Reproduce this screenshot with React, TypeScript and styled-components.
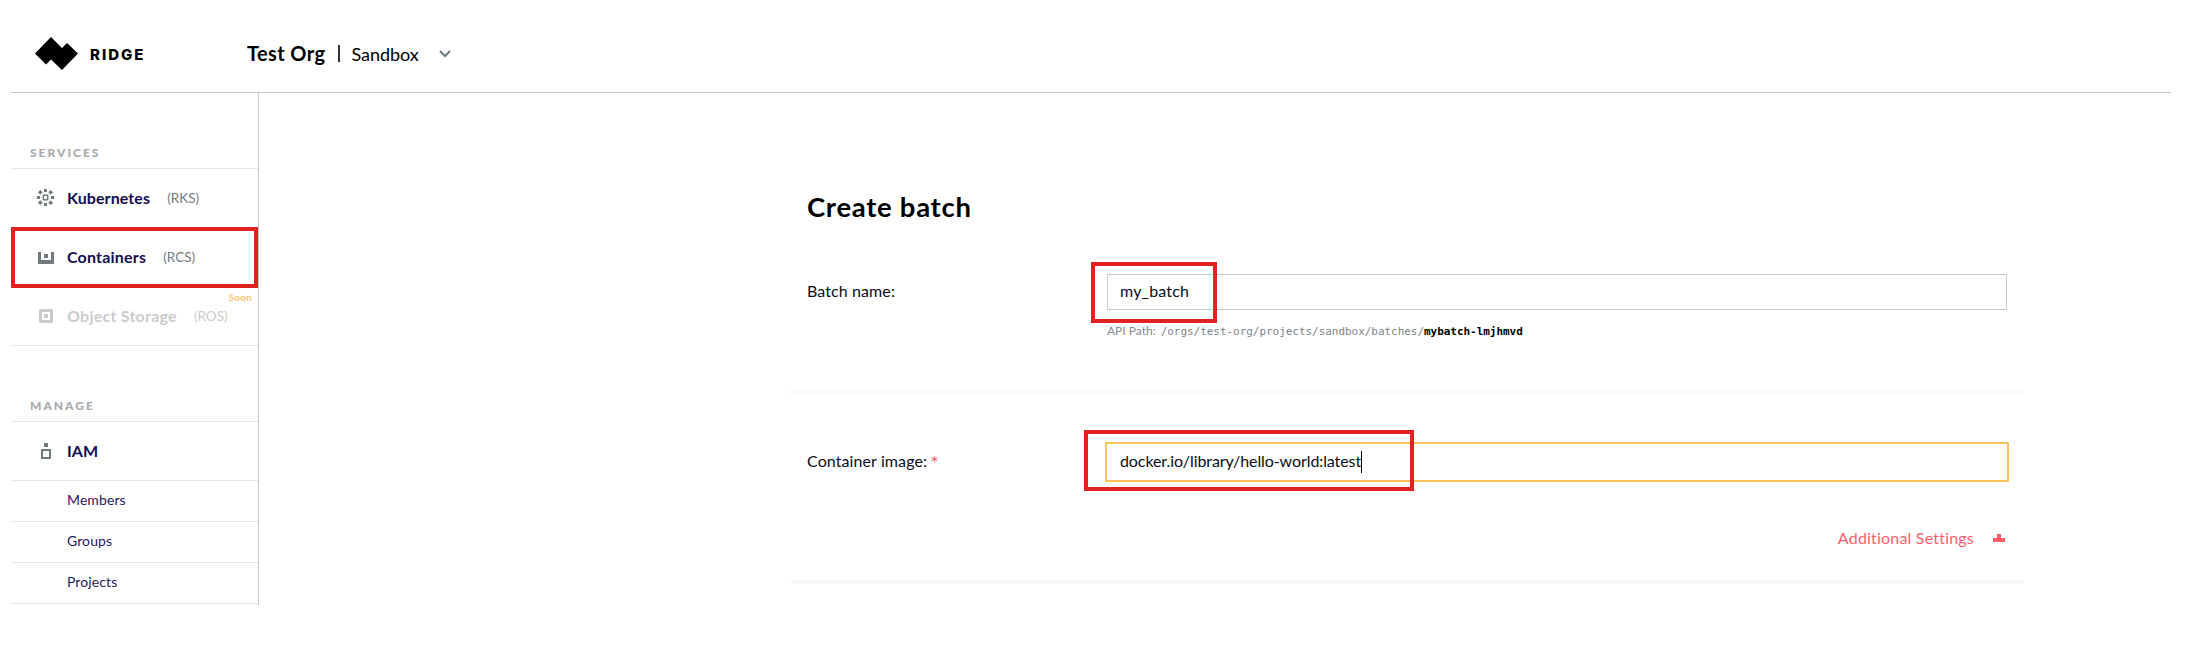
import React from "react";
import styled, { createGlobalStyle } from "styled-components";

const Global = createGlobalStyle`
  *, *::before, *::after { box-sizing: border-box; }
  body { margin: 0; background: #fff; font-family: Lato, "Noto Sans", sans-serif; color: #0c0c14; }
`;

const Page = styled.div`
  width: 2160px;
  margin-left: 11px;
`;

const Header = styled.header`
  display: flex;
  height: 93px;
  border-bottom: 1px solid #c5c9ca;
  padding: 15px 0 0 24px;
  align-items: center;
`;
const Brand = styled.div`
  display: flex;
  align-items: center;
  gap: 12px;
  width: 212px;
  color: #000;
`;
const BrandName = styled.span`
  font: 800 15px/20px Inter, sans-serif;
  letter-spacing: 2px;
  padding-top: 2px;
`;
const Crumb = styled.div`
  display: flex;
  align-items: baseline;
  color: #000;
  line-height: 26px;
  white-space: nowrap;
`;
const OrgName = styled.span`
  font-size: 20px;
  font-weight: 700;
  letter-spacing: 0.4px;
`;
const Separator = styled.i`
  width: 2px;
  height: 17px;
  margin: 0 11px 0 13px;
  background: #333;
  align-self: center;
`;
const ProjectName = styled.span`
  font-size: 18px;
  letter-spacing: -0.05px;
  margin-right: 20px;
`;

const Body = styled.div`
  display: flex;
  align-items: flex-start;
`;
const Sidebar = styled.nav`
  width: 248px;
  height: 512px;
  border-right: 1px solid #c3c7c8;
`;
const SectionLabel = styled.h2`
  margin: 0;
  height: 75px;
  padding: 52px 0 0 19px;
  font-size: 12px;
  line-height: 16px;
  font-weight: 900;
  letter-spacing: 2px;
  color: #a6abac;
`;
const Services = styled.div`
  border: solid #e4e7e7;
  border-width: 1px 0;
`;
const NavRow = styled.a<{ $dim?: boolean; $last?: boolean }>`
  position: relative;
  display: flex;
  align-items: center;
  height: ${(p) => (p.$last ? 58 : 59)}px;
  padding: 0 0 ${(p) => (p.$last ? 2 : 3)}px 26px;
  color: ${(p) => (p.$dim ? "#c9cccd" : "#160b52")};
  white-space: nowrap;
`;
const IconSlot = styled.span<{ $dim?: boolean; $drop: number }>`
  display: flex;
  width: 30px;
  padding-top: ${(p) => p.$drop}px;
  color: ${(p) => (p.$dim ? "#c9cccd" : "#717b7e")};
`;
const NavName = styled.span<{ $track?: number }>`
  font-size: 16px;
  font-weight: 700;
  letter-spacing: ${(p) => p.$track ?? 0.1}px;
`;
const NavCode = styled.span<{ $dim?: boolean }>`
  margin-left: 17px;
  padding-top: 1px;
  font-size: 13.5px;
  color: ${(p) => (p.$dim ? "#c9cccd" : "#747c80")};
`;
const Soon = styled.span`
  position: absolute;
  right: 6px;
  top: 3px;
  font-size: 10px;
  line-height: 14px;
  font-weight: 700;
  letter-spacing: 0.2px;
  color: #fdc56b;
`;
const SubItem = styled.a`
  display: block;
  height: 41px;
  padding: 9px 0 0 56px;
  border-bottom: 1px solid #e4e7e7;
  font-size: 14px;
  line-height: 20px;
  letter-spacing: 0.1px;
  color: #241a60;
`;
const SubList = styled.div`
  border-top: 1px solid #e4e7e7;
`;
const Manage = styled.div`
  border-top: 1px solid #e4e7e7;
`;

const Marker = styled.span<{ $x: number; $y: number; $w: number }>`
  position: absolute;
  left: ${(p) => p.$x}px;
  top: ${(p) => p.$y}px;
  width: ${(p) => p.$w}px;
  height: 61px;
  border: 4px solid #e22121;
  pointer-events: none;
`;

const Main = styled.main`
  width: 1232px;
  margin-left: 532px;
  padding-top: 94px;
`;
const Title = styled.h1`
  margin: 0 0 45px 16px;
  font-size: 27.5px;
  line-height: 40px;
  font-weight: 700;
  letter-spacing: 0.7px;
  color: #000;
`;
const Section = styled.section<{ $h: number; $top?: number }>`
  display: flow-root;
  height: ${(p) => p.$h}px;
  padding-top: ${(p) => p.$top ?? 0}px;
  border-bottom: 4px solid #f6f7f9;
`;
const FieldRow = styled.div`
  display: grid;
  grid-template-columns: 298px 904px;
  align-items: start;
  padding-left: 16px;
`;
const Label = styled.label`
  font-size: 16px;
  line-height: 38px;
  letter-spacing: 0.1px;
`;
const Required = styled.span`
  font-size: 20px;
  line-height: 20px;
  margin-left: -1px;
  vertical-align: -3px;
  color: #ff5f6b;
`;
const Control = styled.div`
  position: relative;
`;
const Field = styled.div<{ $focus?: boolean }>`
  display: flex;
  align-items: center;
  height: ${(p) => (p.$focus ? 40 : 36)}px;
  margin: ${(p) => (p.$focus ? "0" : "2px 2px 0")};
  padding: 0 0 3px ${(p) => (p.$focus ? 13 : 12)}px;
  border: ${(p) => (p.$focus ? "2px solid #ffc259" : "1px solid #c7c8c9")};
  font-size: 16px;
  letter-spacing: ${(p) => (p.$focus ? -0.09 : 0.2)}px;
`;
const Caret = styled.i`
  width: 1px;
  height: 22px;
  margin-top: 3px;
  background: #000;
`;
const ApiPath = styled.div`
  display: flex;
  align-items: baseline;
  gap: 5px;
  margin: 12px 0 0 2px;
  font-size: 12px;
  line-height: 18px;
  color: #858b8e;
`;
const PathCode = styled.code`
  font: 11px/18px "DejaVu Sans Mono", monospace;
  letter-spacing: -0.04px;
  color: #7c8487;
`;
const PathSlug = styled.b`
  color: #000;
`;
const MoreRow = styled.div`
  display: flex;
  justify-content: flex-end;
  align-items: center;
  gap: 19px;
  margin-top: 45px;
  padding-right: 18px;
  font-size: 16px;
  line-height: 22px;
  letter-spacing: 0.2px;
  color: #ff5f6b;
`;

const Logo = () => (
  <svg width="43" height="33" viewBox="0 0 43 33">
    <path d="M0 16.5 16 0 27 11 32 6 43 16.5 27 33 16 22.5 11 27.5Z" fill="currentColor" />
  </svg>
);
const Chevron = () => (
  <svg width="12" height="8" viewBox="0 0 12 8" fill="none" stroke="#6d787c" strokeWidth="2">
    <path d="M1 1 6 6 11 1" />
  </svg>
);
const Cluster = () => (
  <svg width="17" height="17" viewBox="0 0 17 17" fill="currentColor">
    <path d="M7 0h3v3H7zM7 14h3v3H7zM0 7h3v3H0zM14 7h3v3h-3z" />
    <path d="M3.3 0.9l2.4 2.4-2.4 2.4L0.9 3.3zM13.7 0.9l2.4 2.4-2.4 2.4-2.4-2.4zM3.3 11.3l2.4 2.4-2.4 2.4-2.4-2.4zM13.7 11.3l2.4 2.4-2.4 2.4-2.4-2.4z" />
    <path d="M6.3 6.3h4.4v4.4H6.3z" fill="none" stroke="currentColor" strokeWidth="1.5" />
  </svg>
);
const Container = () => (
  <svg width="17" height="12" viewBox="0 0 17 12" fill="currentColor">
    <path d="M1 0h3v8h10V0h3v12H1z" />
    <path d="M7 2h4v4H7z" />
  </svg>
);
const Storage = () => (
  <svg width="16" height="14" viewBox="0 0 16 14" fill="currentColor">
    <path fillRule="evenodd" d="M2 1l1-1h12l1 1v12l-1 1H3l-1-1zM5 3v8h8V3z" />
    <path d="M7 5h4v4H7z" />
  </svg>
);
const Person = () => (
  <svg width="14" height="16" viewBox="0 0 14 16">
    <path d="M7 0h4v4H7z" fill="currentColor" />
    <path d="M5 7h8v8H5z" fill="none" stroke="currentColor" strokeWidth="2" />
  </svg>
);
const Plus = () => (
  <svg width="12" height="8" viewBox="0 0 12 8">
    <path d="M4 0h4v4h4v4H0V4h4z" fill="#ff5f6b" />
  </svg>
);

export default function App() {
  return (
    <Page>
      <Global />
      <Header>
        <Brand>
          <Logo />
          <BrandName>RIDGE</BrandName>
        </Brand>
        <Crumb>
          <OrgName>Test Org</OrgName>
          <Separator />
          <ProjectName>Sandbox</ProjectName>
        </Crumb>
        <Chevron />
      </Header>
      <Body>
        <Sidebar>
          <SectionLabel>SERVICES</SectionLabel>
          <Services>
            <NavRow>
              <IconSlot $drop={1}><Cluster /></IconSlot>
              <NavName>Kubernetes</NavName>
              <NavCode>(RKS)</NavCode>
            </NavRow>
            <NavRow>
              <IconSlot $drop={4}><Container /></IconSlot>
              <NavName $track={0.2}>Containers</NavName>
              <NavCode>(RCS)</NavCode>
              <Marker $x={0} $y={-1} $w={247} />
            </NavRow>
            <NavRow $dim $last>
              <IconSlot $dim $drop={2}><Storage /></IconSlot>
              <NavName $track={0.25}>Object Storage</NavName>
              <NavCode $dim>(ROS)</NavCode>
              <Soon>Soon</Soon>
            </NavRow>
          </Services>
          <SectionLabel>MANAGE</SectionLabel>
          <Manage>
            <NavRow $last>
              <IconSlot $drop={2}><Person /></IconSlot>
              <NavName>IAM</NavName>
            </NavRow>
            <SubList>
              <SubItem>Members</SubItem>
              <SubItem>Groups</SubItem>
              <SubItem>Projects</SubItem>
            </SubList>
          </Manage>
        </Sidebar>
        <Main>
          <Title>Create batch</Title>
          <Section $h={122}>
            <FieldRow>
              <Label>Batch name:</Label>
              <Control>
                <Field>my_batch</Field>
                <ApiPath>
                  API Path:
                  <PathCode>
                    /orgs/test-org/projects/sandbox/batches/<PathSlug>mybatch-lmjhmvd</PathSlug>
                  </PathCode>
                </ApiPath>
                <Marker $x={-14} $y={-10} $w={126} />
              </Control>
            </FieldRow>
          </Section>
          <Section $h={190} $top={48}>
            <FieldRow>
              <Label>
                Container image: <Required>*</Required>
              </Label>
              <Control>
                <Field $focus>
                  docker.io/library/hello-world:latest
                  <Caret />
                </Field>
                <Marker $x={-21} $y={-12} $w={330} />
              </Control>
            </FieldRow>
            <MoreRow>
              Additional Settings
              <Plus />
            </MoreRow>
          </Section>
        </Main>
      </Body>
    </Page>
  );
}
